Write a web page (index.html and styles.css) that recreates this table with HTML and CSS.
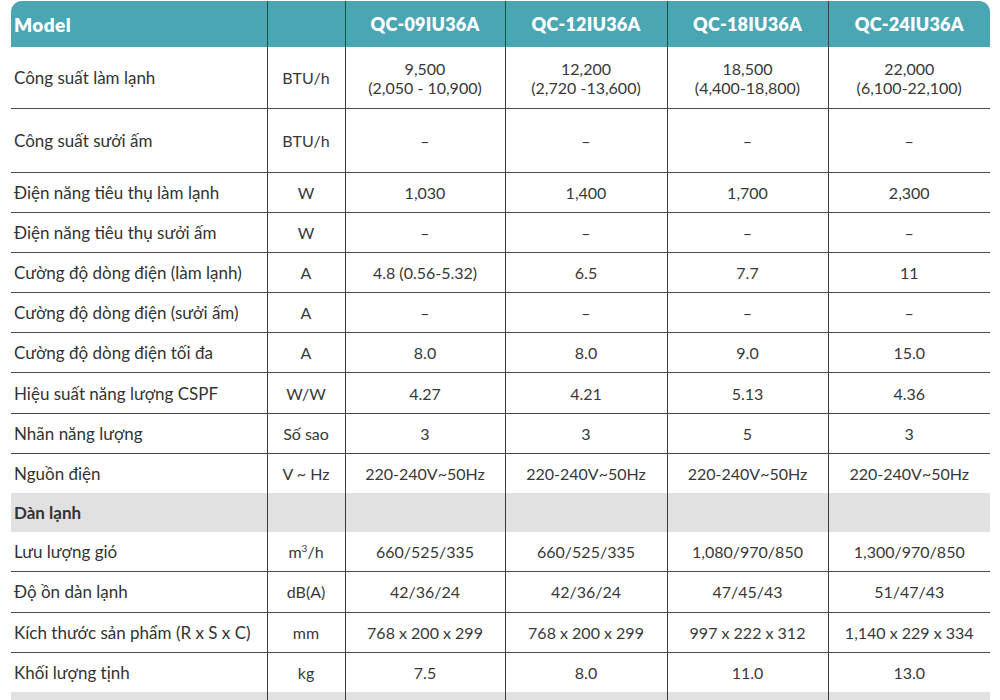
FILE: index.html
```html
<!DOCTYPE html>
<html lang="vi">
<head>
<meta charset="utf-8">
<title>Thông số kỹ thuật</title>
<link rel="stylesheet" href="styles.css">
</head>
<body>
<table class="spec">
  <colgroup>
    <col class="c-label"><col class="c-unit"><col class="c-m1"><col class="c-m2"><col class="c-m3"><col class="c-m4">
  </colgroup>
  <thead>
    <tr class="head">
      <th class="label first">Model</th>
      <th></th>
      <th>QC-09IU36A</th>
      <th>QC-12IU36A</th>
      <th>QC-18IU36A</th>
      <th class="last">QC-24IU36A</th>
    </tr>
  </thead>
  <tbody>
    <tr class="r-tall">
      <td class="label">Công suất làm lạnh</td><td class="unit">BTU/h</td>
      <td>9,500<br>(2,050 - 10,900)</td><td>12,200<br>(2,720 -13,600)</td><td>18,500<br>(4,400-18,800)</td><td>22,000<br>(6,100-22,100)</td>
    </tr>
    <tr class="r-tall2">
      <td class="label">Công suất sưởi ấm</td><td class="unit">BTU/h</td>
      <td>–</td><td>–</td><td>–</td><td>–</td>
    </tr>
    <tr>
      <td class="label">Điện năng tiêu thụ làm lạnh</td><td class="unit">W</td>
      <td>1,030</td><td>1,400</td><td>1,700</td><td>2,300</td>
    </tr>
    <tr>
      <td class="label">Điện năng tiêu thụ sưởi ấm</td><td class="unit">W</td>
      <td>–</td><td>–</td><td>–</td><td>–</td>
    </tr>
    <tr>
      <td class="label">Cường độ dòng điện (làm lạnh)</td><td class="unit">A</td>
      <td>4.8 (0.56-5.32)</td><td>6.5</td><td>7.7</td><td>11</td>
    </tr>
    <tr>
      <td class="label">Cường độ dòng điện (sưởi ấm)</td><td class="unit">A</td>
      <td>–</td><td>–</td><td>–</td><td>–</td>
    </tr>
    <tr>
      <td class="label">Cường độ dòng điện tối đa</td><td class="unit">A</td>
      <td>8.0</td><td>8.0</td><td>9.0</td><td>15.0</td>
    </tr>
    <tr>
      <td class="label">Hiệu suất năng lượng CSPF</td><td class="unit">W/W</td>
      <td>4.27</td><td>4.21</td><td>5.13</td><td>4.36</td>
    </tr>
    <tr>
      <td class="label">Nhãn năng lượng</td><td class="unit">Số sao</td>
      <td>3</td><td>3</td><td>5</td><td>3</td>
    </tr>
    <tr>
      <td class="label">Nguồn điện</td><td class="unit">V ~ Hz</td>
      <td>220-240V~50Hz</td><td>220-240V~50Hz</td><td>220-240V~50Hz</td><td>220-240V~50Hz</td>
    </tr>
    <tr class="section">
      <td class="label">Dàn lạnh</td><td></td><td></td><td></td><td></td><td></td>
    </tr>
    <tr>
      <td class="label">Lưu lượng gió</td><td class="unit">m<sup>3</sup>/h</td>
      <td>660/525/335</td><td>660/525/335</td><td>1,080/970/850</td><td>1,300/970/850</td>
    </tr>
    <tr>
      <td class="label">Độ ồn dàn lạnh</td><td class="unit">dB(A)</td>
      <td>42/36/24</td><td>42/36/24</td><td>47/45/43</td><td>51/47/43</td>
    </tr>
    <tr>
      <td class="label">Kích thước sản phẩm (R x S x C)</td><td class="unit">mm</td>
      <td>768 x 200 x 299</td><td>768 x 200 x 299</td><td>997 x 222 x 312</td><td>1,140 x 229 x 334</td>
    </tr>
    <tr>
      <td class="label">Khối lượng tịnh</td><td class="unit">kg</td>
      <td>7.5</td><td>8.0</td><td>11.0</td><td>13.0</td>
    </tr>
    <tr class="section tail">
      <td class="label"></td><td></td><td></td><td></td><td></td><td></td>
    </tr>
  </tbody>
</table>
</body>
</html>
```

FILE: styles.css
```css
html, body {
  margin: 0;
  padding: 0;
  background: #ffffff;
  overflow: hidden;
}

body {
  padding: 1px 0 0 11px;
  font-family: "Lato", "Open Sans", sans-serif;
  color: #333333;
}

.spec {
  border-collapse: collapse;
  table-layout: fixed;
  width: 979px;
}

.c-label { width: 256px; }
.c-unit { width: 78px; }
.c-m1 { width: 160px; }
.c-m2 { width: 162px; }
.c-m3 { width: 161px; }
.c-m4 { width: 162px; }

.spec th,
.spec td {
  padding: 0;
  text-align: center;
  vertical-align: middle;
  border-left: 1.5px solid #3d3d3d;
}

.spec th:first-child,
.spec td:first-child {
  border-left: none;
}

.head {
  height: 46px;
}

.head th {
  background: #4aa6b3;
  color: #ffffff;
  font-weight: 800;
  font-size: 18px;
  letter-spacing: 0.2px;
}

.head th.label {
  font-size: 19px;
  letter-spacing: 0.4px;
}

.head th.first {
  border-top-left-radius: 11px;
}

.head th.last {
  border-top-right-radius: 11px;
}

.spec th.label,
.spec td.label {
  text-align: left;
  padding-left: 3px;
}

.spec tbody td {
  font-size: 16px;
  line-height: 19px;
  color: #383838;
  height: 39.2px;
}

.spec tbody td.label {
  font-size: 17px;
  color: #333333;
}

.spec tbody tr + tr td {
  border-top: 1.5px solid #4a4a4a;
}

.spec tbody tr.r-tall td {
  height: 61px;
}

.spec tbody tr.r-tall2 td {
  height: 62.5px;
}

.spec tbody tr.section td {
  background: #e1e1e1;
  border-top: none;
  font-weight: 700;
}

.spec tbody tr.section + tr td {
  border-top: none;
}

.spec sup {
  font-size: 10px;
  line-height: 0;
}
```
